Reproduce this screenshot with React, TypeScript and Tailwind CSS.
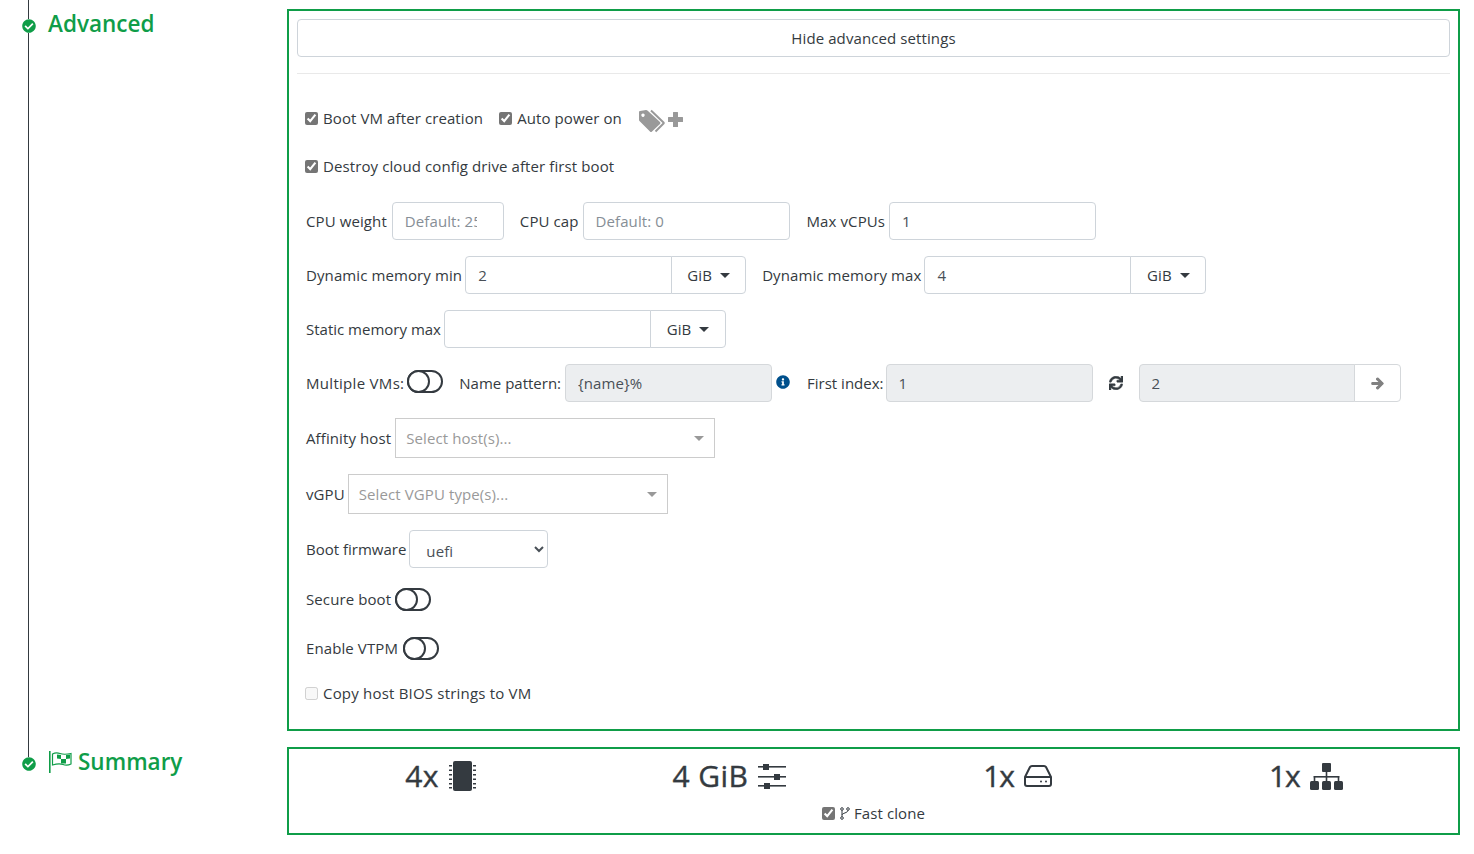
import {
  FaArrowRight,
  FaCheckCircle,
  FaInfoCircle,
  FaSync,
} from "react-icons/fa";

const inputClass =
  "h-[38px] rounded border border-[#ced4da] bg-white px-3 text-[15px] text-[#495057] placeholder:text-[#868e96] outline-none";
const disabledClass =
  "h-[38px] rounded border border-[#d5d8db] bg-[#eceef0] px-3 text-[15px] text-[#495057]";

const Toggle = ({ raised }: { raised?: boolean }) => (
  <span
    className={`inline-flex h-[23px] w-[36px] rounded-full border-2 border-[#343a40] bg-white ${raised ? "-mt-[3px]" : ""}`}
  >
    <span className="-ml-[2px] -mt-[2px] h-[23px] w-[23px] rounded-full border-2 border-[#343a40] bg-white" />
  </span>
);

const Check = ({ label, checked = true }: { label: React.ReactNode; checked?: boolean }) => (
  <label className="flex items-center gap-[5px]">
    {checked ? (
      <input type="checkbox" defaultChecked className="h-[13px] w-[13px] accent-[#757575]" />
    ) : (
      <input type="checkbox" disabled className="h-[13px] w-[13px]" />
    )}
    <span>{label}</span>
  </label>
);

const UnitInput = ({ value, width = "w-[281px]" }: { value?: string; width?: string }) => (
  <div className={`flex h-[38px] ${width}`}>
    <input
      defaultValue={value}
      className="h-[38px] w-[207px] rounded-l border border-[#ced4da] bg-white px-3 text-[15px] text-[#495057] outline-none"
    />
    <button className="-ml-px flex h-[38px] flex-1 items-center justify-center gap-2 rounded-r border border-[#ced4da] bg-white text-[15px]">
      GiB
      <span className="h-0 w-0 border-x-[5px] border-t-[5px] border-x-transparent border-t-[#343a40]" />
    </button>
  </div>
);

const Combo = ({ placeholder }: { placeholder: string }) => (
  <div className="flex h-[40px] w-[320px] items-center justify-between border border-[#cccccc] bg-white pl-[10px] pr-[10px] text-[15px] text-[#999999]">
    <span>{placeholder}</span>
    <span className="h-0 w-0 border-x-[5px] border-t-[5px] border-x-transparent border-t-[#999999]" />
  </div>
);

const StepIcon = () => (
  <span className="absolute left-[-7px] top-0 flex h-[14px] w-[14px] items-center justify-center rounded-full bg-white">
    <FaCheckCircle className="h-[14px] w-[14px] text-[#0f9d48]" />
  </span>
);

const Stat = ({ text, icon, tight }: { text: string; icon: React.ReactNode; tight?: boolean }) => (
  <div className="flex items-center justify-center gap-[10px] text-[30px] leading-[36px] text-[#343a40] [-webkit-text-stroke:0.4px_#343a40]">
    <span className={tight ? "tracking-[-1px]" : "tracking-[0.4px]"}>{text}</span>
    {icon}
  </div>
);

const TagsIcon = () => (
  <svg width="27" height="24" viewBox="0 0 27 24" className="mt-[6px] shrink-0" fill="#999999">
    <path fillRule="evenodd" d="M1 3 Q1 2 2 2 L8 1 Q9 1 10 2 L22 13 Q23 14 22 15 L14 22.5 Q13 23.5 12 22.5 L1.5 12 Q1 11.5 1 10.5 Z M5 4.5 a1.7 1.7 0 1 0 .01 0 Z" />
    <path d="M13 1.5 L25.5 13.5 Q26 14 25.5 14.5 L17.5 22.5" fill="none" stroke="#999999" strokeWidth="2" />
  </svg>
);

const PlusIcon = () => (
  <svg width="15" height="15" viewBox="0 0 15 15" className="mt-[9px] shrink-0" fill="#999999">
    <path d="M5.5 0 H9.5 Q10 0 10 .5 V5 H14.5 Q15 5 15 5.5 V9.5 Q15 10 14.5 10 H10 V14.5 Q10 15 9.5 15 H5.5 Q5 15 5 14.5 V10 H.5 Q0 10 0 9.5 V5.5 Q0 5 .5 5 H5 V.5 Q5 0 5.5 0 Z" />
  </svg>
);

const FlagIcon = () => (
  <svg width="24" height="22" viewBox="0 0 24 22" className="shrink-0" fill="#0f9d48">
    <rect x="1" y="0" width="1.6" height="22" />
    <path d="M4.5 3 Q8 1 12 2.5 T23 2.5 V13 Q19 15 15 13.5 T4.5 14 Z" fill="none" stroke="#0f9d48" strokeWidth="1.2" />
    <path d="M9 3.5 L13 4 V8 L9 7.5 Z M18 4 L22 3.5 V7.5 L18 8 Z M13 8 L18 8 V12.5 L13 12.5 Z" />
  </svg>
);

const ChipIcon = () => (
  <svg width="28" height="30" viewBox="0 0 28 30" className="shrink-0" fill="#343a40">
    <rect x="4" y="0" width="19" height="30" rx="2" />
    {[4, 8.5, 13, 17.5, 22, 26].map((y) => (
      <g key={y}>
        <rect x="0" y={y} width="3" height="1.5" />
        <rect x="24" y={y} width="3" height="1.5" />
      </g>
    ))}
  </svg>
);

const SlidersIcon = () => (
  <svg width="28" height="26" viewBox="0 0 28 26" className="shrink-0" fill="#343a40">
    <rect x="0" y="3" width="28" height="1.6" />
    <rect x="0" y="13" width="28" height="1.6" />
    <rect x="0" y="22" width="28" height="1.6" />
    <rect x="5" y="1" width="6" height="6" />
    <rect x="16" y="11" width="6" height="6" />
    <rect x="6" y="20" width="6" height="6" />
  </svg>
);

const DriveIcon = () => (
  <svg width="28" height="24" viewBox="0 0 28 24" className="shrink-0" fill="none" stroke="#343a40" strokeWidth="2">
    <path d="M1 13 L6 3 Q6.5 2 8 2 H20 Q21.5 2 22 3 L27 13 V20 Q27 22 25 22 H3 Q1 22 1 20 Z" />
    <path d="M1 13 H27" />
    <circle cx="17" cy="17.5" r="1" fill="#343a40" stroke="none" />
    <circle cx="22" cy="17.5" r="1" fill="#343a40" stroke="none" />
  </svg>
);

const NetworkIcon = () => (
  <svg width="33" height="27" viewBox="0 0 33 27" className="shrink-0" fill="#343a40">
    <rect x="12" y="0" width="9" height="9" rx="1" />
    <rect x="0" y="18" width="9" height="9" rx="1.5" />
    <rect x="12" y="18" width="9" height="9" rx="1.5" />
    <rect x="24" y="18" width="9" height="9" rx="1.5" />
    <rect x="15.7" y="9" width="1.6" height="9" />
    <rect x="3.7" y="13" width="25.6" height="1.6" />
    <rect x="3.7" y="13" width="1.6" height="5" />
    <rect x="27.7" y="13" width="1.6" height="5" />
  </svg>
);

const ForkIcon = () => (
  <svg width="10" height="13" viewBox="0 0 10 13" className="shrink-0" fill="none" stroke="#343a40" strokeWidth="1">
    <circle cx="2" cy="2" r="1.3" />
    <circle cx="8" cy="2" r="1.3" />
    <circle cx="2" cy="11" r="1.3" />
    <path d="M2 3.3 V9.7 M8 3.3 C8 6 2 6 2 8" />
  </svg>
);

export default function App() {
  return (
    <div
      className="relative h-[854px] overflow-hidden bg-white pt-[9px] text-[15px] tracking-[0.1px] text-[#343a40]"
      style={{ fontFamily: '"Open Sans", "Noto Sans", sans-serif' }}
    >
      <div className="absolute left-[28px] top-0 h-[762px] w-px bg-[#343a40]" />

      <div className="flex">
        <div className="relative w-[287px] shrink-0 pl-[48px]">
          <div className="absolute left-[29px] top-[10px]">
            <StepIcon />
          </div>
          <h2 className="text-[22.5px] font-semibold leading-[29px] tracking-normal text-[#0f9d48]">Advanced</h2>
        </div>

        <div className="h-[722px] w-[1173px] border-2 border-[#0f9d48] px-2 pt-2">
          <button className="h-[38px] w-full rounded border border-[#ced4da] bg-white text-[15px] text-[#343a40]">
            Hide advanced settings
          </button>
          <div className="mt-4 border-t border-[#e9e9e9]" />

          <div className="px-2">
            <div className="mt-[32px] flex h-[24px] items-center gap-4">
              <Check label="Boot VM after creation" />
              <Check label="Auto power on" />
              <span className="flex items-start gap-[3px]">
                <TagsIcon />
                <PlusIcon />
              </span>
            </div>

            <div className="mt-[24px] flex h-[24px] items-center">
              <Check label="Destroy cloud config drive after first boot" />
            </div>

            <div className="mt-[24px] flex items-center pl-px">
              <span className="mr-[5px]">CPU weight</span>
              <input placeholder="Default: 25" className={`${inputClass} w-[112px] pr-[26px]`} />
              <span className="ml-4 mr-[4px]">CPU cap</span>
              <input placeholder="Default: 0" className={`${inputClass} w-[207px]`} />
              <span className="ml-[17px] mr-[4px]">Max vCPUs</span>
              <input defaultValue="1" className={`${inputClass} w-[207px]`} />
            </div>

            <div className="mt-4 flex items-center pl-px">
              <span className="mr-[3px]">Dynamic memory min</span>
              <UnitInput value="2" />
              <span className="ml-4 mr-[3px]">Dynamic memory max</span>
              <UnitInput value="4" width="w-[282px]" />
            </div>

            <div className="mt-4 flex items-center pl-px">
              <span className="mr-[3px] tracking-normal">Static memory max</span>
              <UnitInput width="w-[282px]" />
            </div>

            <div className="mt-4 flex items-center pl-px">
              <span className="mr-[3px] tracking-[0.3px]">Multiple VMs:</span>
              <Toggle raised />
              <span className="ml-4 mr-[4px] tracking-normal">Name pattern:</span>
              <input disabled value="{name}%" className={`${disabledClass} w-[207px]`} />
              <FaInfoCircle className="mb-[3px] ml-[4px] h-[14px] w-[14px] text-[#00508c]" />
              <span className="ml-[17px] mr-[2px] tracking-normal">First index:</span>
              <input disabled value="1" className={`${disabledClass} w-[207px]`} />
              <FaSync stroke="currentColor" strokeWidth={20} className="mx-4 h-[14px] w-[14px] text-[#343a40]" />
              <div className="flex h-[38px] w-[262px]">
                <input disabled value="2" className={`${disabledClass} w-[216px] rounded-r-none`} />
                <button className="-ml-px flex h-[38px] flex-1 items-center justify-center rounded-r border border-[#d5d8db] bg-white">
                  <FaArrowRight stroke="currentColor" strokeWidth={40} className="h-[13px] w-[13px] text-[#808080]" />
                </button>
              </div>
            </div>

            <div className="mt-4 flex items-center pl-px">
              <span className="mr-[4px]">Affinity host</span>
              <Combo placeholder="Select host(s)..." />
            </div>

            <div className="mt-4 flex items-center pl-px">
              <span className="mr-[3px]">vGPU</span>
              <Combo placeholder="Select VGPU type(s)..." />
            </div>

            <div className="mt-4 flex items-center pl-px">
              <span className="mr-[3px] tracking-normal">Boot firmware</span>
              <select className="h-[38px] w-[139px] rounded border border-[#ced4da] bg-white pl-3 pt-[3px] text-[15px] text-[#495057]">
                <option>uefi</option>
              </select>
            </div>

            <div className="mt-[20px] flex items-center pl-px">
              <span className="mr-[4px]">Secure boot</span>
              <Toggle />
            </div>

            <div className="mt-[26px] flex items-center pl-px">
              <span className="mr-[5px]">Enable VTPM</span>
              <Toggle />
            </div>

            <div className="mt-[21px] flex h-[24px] items-center tracking-[0.2px]">
              <Check label="Copy host BIOS strings to VM" checked={false} />
            </div>
          </div>
        </div>
      </div>

      <div className="mt-4 flex">
        <div className="relative w-[287px] shrink-0 pl-[48px]">
          <div className="absolute left-[29px] top-[10px]">
            <StepIcon />
          </div>
          <h2 className="flex h-[30px] items-center gap-[6px] text-[22.5px] font-semibold leading-[30px] tracking-normal text-[#0f9d48]">
            <FlagIcon />
            Summary
          </h2>
        </div>

        <div className="h-[88px] w-[1173px] border-2 border-[#0f9d48] px-2 pt-[9px]">
          <div className="grid grid-cols-4">
            <Stat text="4x" icon={<ChipIcon />} />
            <Stat text="4 GiB" icon={<SlidersIcon />} />
            <Stat text="1x" tight icon={<DriveIcon />} />
            <Stat text="1x" tight icon={<NetworkIcon />} />
          </div>
          <div className="mt-[8px] flex justify-center">
            <Check
              label={
                <span className="flex items-center gap-[4px]">
                  <ForkIcon />
                  Fast clone
                </span>
              }
            />
          </div>
        </div>
      </div>
    </div>
  );
}
